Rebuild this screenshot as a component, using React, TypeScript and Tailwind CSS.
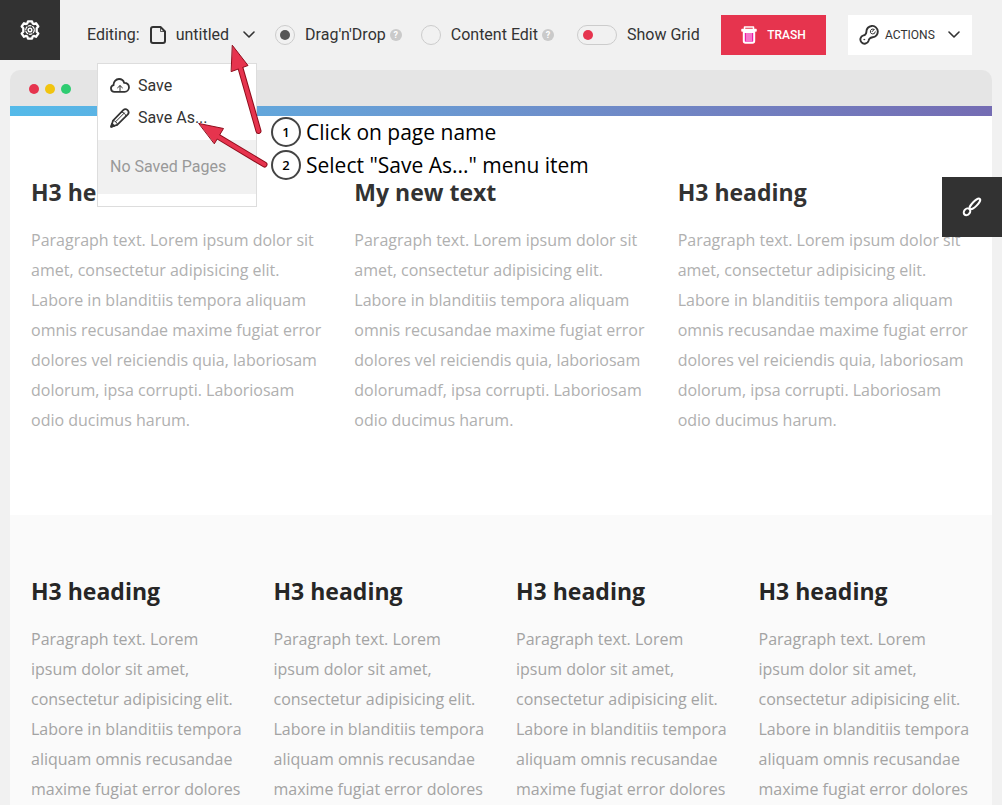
import { useState, type ReactNode } from "react";

function Icon({ className, children, box = "0 0 20 20" }: { className: string; children: ReactNode; box?: string }) {
  return (
    <svg viewBox={box} className={className} fill="none" stroke="currentColor" strokeWidth="2" strokeLinejoin="round" strokeLinecap="round" aria-hidden="true">
      {children}
    </svg>
  );
}

function GearIcon() {
  return (
    <Icon className="size-5">
      <path d="M7.3 3.5 8 1.4h4l.7 2.100 1.100.6 2.200-.9 2.300 3.300-1.600 1.700v3.600l1.600 1.700-2.300 3.300-2.200-.9-1.100.6-.7 2.100H8l-.7-2.100-1.100-.6-2.200.9-2.300-3.300 1.600-1.700V8.200L1.700 6.500 4 3.200l2.200.9z" strokeWidth="2.300" />
      <circle cx="10" cy="10" r="4.300" strokeWidth="1.200" strokeDasharray="2.900 1.600" />
      <circle cx="10" cy="10" r="1.800" strokeWidth="1.500" />
    </Icon>
  );
}

function PageIcon() {
  return (
    <Icon className="h-[18px] w-4" box="0 0 16 18">
      <path d="M10.500 1H3a2 2 0 0 0-2 2v12a2 2 0 0 0 2 2h10a2 2 0 0 0 2-2V5.500z" strokeWidth="2" />
      <path d="M10.500 1.400v4.100h4.100" strokeWidth=".8" />
    </Icon>
  );
}

function ChevronIcon() {
  return (
    <Icon className="h-[7px] w-3" box="0 0 12 7">
      <path d="m1 1 5 5 5-5" strokeWidth="1.600" />
    </Icon>
  );
}

function CloudIcon() {
  return (
    <Icon className="h-[15px] w-5" box="0 0 20 15">
      <path d="M4.400 13.800a3.400 3.400 0 0 1-.8-6.700C3.300 3.800 5.900 1 9 1c2.600 0 4.500 1.500 5.200 3.900 2.700-.2 4.800 1.700 4.800 4.300s-2 4.600-4.400 4.600z" strokeWidth="1.800" />
      <path d="M10 13V7.800M7.600 9.800 10 7.600l2.400 2.200" strokeWidth="1" />
    </Icon>
  );
}

function PencilIcon() {
  return (
    <Icon className="size-5">
      <path d="M1.200 18.800 3 12.600 13.200 2.200c1.300-1.300 3.200-1.200 4.400 0s1.300 3.100 0 4.400L7.200 16.900z" strokeWidth="1.700" />
      <path d="M3.200 12.600c1.900 0 4.200 2.200 4.200 4.200M5.900 13.500l8.500-8.600M11.600 4c2.200.3 4 2 4.400 4.300" strokeWidth="1" />
      <path d="M1.200 18.800 2 15.900l2 2z" fill="currentColor" />
    </Icon>
  );
}

function TrashIcon() {
  return (
    <Icon className="h-[18px] w-4" box="0 0 16 18">
      <path d="M2.800 6h10.400v9a1.700 1.700 0 0 1-1.700 1.700h-7A1.700 1.700 0 0 1 2.800 15z" fill="#ee1fa8" strokeWidth="2" />
      <path d="M1 4.900V3.500h14v1.400zM3.500 3V1h9v2" strokeWidth="1.500" />
      <path d="M6 7v8M8 7v8M10 7v8" strokeWidth=".8" />
    </Icon>
  );
}

function WrenchIcon() {
  return (
    <Icon className="size-5">
      <path d="M7.400 6.800A5.700 5.700 0 1 1 13.600 12.300C12.200 12.500 11.400 12.900 10.600 13.700c-.7.800-.9 1.200-1 2A4.200 4.200 0 1 1 4.500 10.400c.9-.2 1.300-.4 1.900-1.100.7-.7.900-1.300 1-2.500z" strokeWidth="1.900" />
      <path d="M14.900 4.200a2.500 2.500 0 1 0 1.400 2.700M13.200 6.600l2-2.200" strokeWidth="1" />
      <circle cx="5.200" cy="14.600" r=".5" fill="currentColor" strokeWidth=".5" />
    </Icon>
  );
}

function BrushIcon() {
  return (
    <Icon className="size-5">
      <ellipse cx="12.900" cy="6.900" rx="7" ry="2.400" transform="rotate(-45 12.900 6.900)" />
      <ellipse cx="5" cy="14.800" rx="3.700" ry="2.900" transform="rotate(-50 5 14.800)" />
    </Icon>
  );
}

function HelpBadge() {
  return <span className="ml-1 grid size-3 place-content-center rounded-full bg-[#cacaca] text-[9px] leading-3 font-bold text-white">?</span>;
}

const modes = [
  { id: "drag", label: "Drag'n'Drop" },
  { id: "edit", label: "Content Edit" },
];

function Toolbar() {
  const [mode, setMode] = useState("drag");
  const [grid, setGrid] = useState(false);
  return (
    <header className="flex h-[70px] text-[16px] leading-5 text-[#333]">
      <button aria-label="Settings" className="grid size-[60px] shrink-0 place-content-center bg-[#323232] text-white">
        <GearIcon />
      </button>
      <div className="flex h-[69px] grow items-center pr-[30px]">
        <div className="relative ml-[27px]">
          <button className="flex items-center">
            Editing:
            <span className="mx-[10px]"><PageIcon /></span>
            untitled
            <span className="ml-[14px]"><ChevronIcon /></span>
          </button>
          <PageMenu />
        </div>
        <div className="ml-5 flex items-center gap-[19px]">
          {modes.map((m) => (
            <div key={m.id} className="flex items-center">
              <input
                id={m.id}
                type="radio"
                name="mode"
                checked={mode === m.id}
                onChange={() => setMode(m.id)}
                className="grid size-5 appearance-none place-content-center rounded-full border border-[#ccc] before:size-[10px] before:rounded-full checked:before:bg-[#555]"
              />
              <label htmlFor={m.id} className="pl-[10px] whitespace-nowrap">{m.label}</label>
              <HelpBadge />
            </div>
          ))}
        </div>
        <div className="ml-[23px] flex items-center">
          <input
            id="grid"
            type="checkbox"
            checked={grid}
            onChange={() => setGrid(!grid)}
            className="flex h-5 w-10 appearance-none items-center rounded-full border border-[#ccc] px-[5px] before:size-[10px] before:rounded-full before:bg-[#e6344e] checked:justify-end"
          />
          <label htmlFor="grid" className="pl-[10px] whitespace-nowrap">Show Grid</label>
        </div>
        <div className="ml-auto flex gap-[22px] text-[12px]">
          <button className="flex h-10 w-[105px] items-center justify-center gap-[10px] bg-[#e6344e] font-medium text-white">
            <TrashIcon />
            TRASH
          </button>
          <button className="flex h-10 w-[124px] items-center gap-[6px] bg-white pr-3 pl-[11px]">
            <WrenchIcon />
            ACTIONS
            <span className="ml-auto"><ChevronIcon /></span>
          </button>
        </div>
      </div>
    </header>
  );
}

function PageMenu() {
  return (
    <div className="absolute top-[38px] left-[10px] z-10 w-40 border border-[#ddd] bg-white pt-[6px] pb-3">
      <button className="flex h-8 w-full items-center gap-2 pl-3"><CloudIcon />Save</button>
      <button className="flex h-8 w-full items-center gap-2 pl-3"><PencilIcon />Save As...</button>
      <p className="mt-[6px] flex h-[54px] items-center bg-[#f1f1f1] pl-3 text-[#999]">No Saved Pages</p>
    </div>
  );
}

function Step({ n, children }: { n: number; children: ReactNode }) {
  return (
    <li className="flex items-center gap-[5px]">
      <span className="grid size-[30px] place-content-center rounded-full border-2 border-[#444] bg-white text-[13px] leading-5 font-semibold">{n}</span>
      {children}
    </li>
  );
}

function Annotations() {
  return (
    <>
      <svg className="pointer-events-none absolute top-[40px] left-[190px] z-20 h-[130px] w-[85px]" viewBox="190 40 85 130" strokeLinejoin="round" strokeLinecap="round" aria-hidden="true">
        <path d="M240.500 68 258.500 131M217 136 264.500 164.500" stroke="#8f0d1c" strokeWidth="6" />
        <g fill="#e6344e" stroke="#8f0d1c">
          <path d="M232.500 45.500 248 65.500 231.500 71.500z" />
          <path d="M199 123.500 223.500 128.500 214.500 143.500z" />
        </g>
        <path d="M240 66.500 258.500 131M216 135.500 264.500 164.500" stroke="#e6344e" strokeWidth="4" />
      </svg>
      <ol className="absolute top-[117px] left-[271px] z-20 flex flex-col gap-[3px] font-['Open_Sans',sans-serif] text-[21px] leading-[30px] whitespace-nowrap text-black">
        <Step n={1}>Click on page name</Step>
        <Step n={2}>Select "Save As..." menu item</Step>
      </ol>
    </>
  );
}

type Block = { title: string; text: string };

const lorem =
  "Paragraph text. Lorem ipsum dolor sit amet, consectetur adipisicing elit. Labore in blanditiis tempora aliquam omnis recusandae maxime fugiat error dolores";
const tail = " vel reiciendis quia, laboriosam dolorum, ipsa corrupti. Laboriosam odio ducimus harum.";

const topBlocks: Block[] = [
  { title: "H3 heading", text: lorem + tail },
  { title: "My new text", text: lorem + tail.replace("dolorum", "dolorumadf") },
  { title: "H3 heading", text: lorem + tail },
];
const bottomBlocks: Block[] = Array.from({ length: 4 }, () => ({ title: "H3 heading", text: lorem }));

function Column({ title, text }: Block) {
  return (
    <article className="px-[15px]">
      <h3 className="mb-4 text-[23px] leading-[33px] font-bold">{title}</h3>
      <p className="text-[16px] leading-[30px]">{text}</p>
    </article>
  );
}

export default function App() {
  return (
    <div className="relative flex min-h-screen flex-col bg-[#f1f1f1] font-[Roboto,sans-serif]">
      <Toolbar />
      <main className="mx-[10px] flex grow flex-col font-['Open_Sans',sans-serif]">
        <div className="flex h-9 items-center gap-[6px] rounded-t-[10px] bg-[#e5e5e5] pt-[2px] pl-[19px]">
          <span className="size-[10px] rounded-full bg-[#e6344e]" />
          <span className="size-[10px] rounded-full bg-[#f1c40f]" />
          <span className="size-[10px] rounded-full bg-[#2ecc71]" />
        </div>
        <div className="h-[10px] bg-linear-to-r from-[#54bae9] to-[#746cb3]" />
        <section className="bg-white pt-[60px] pb-20 text-[#b0b0b0] [&_h3]:text-[#323232]">
          <div className="mx-auto grid max-w-[970px] grid-cols-3">
            {topBlocks.map((b, i) => <Column key={i} {...b} />)}
          </div>
        </section>
        <section className="grow bg-[#fafafa] pt-[60px] text-[#a3a3a3] [&_h3]:text-[#262626]">
          <div className="mx-auto grid max-w-[970px] grid-cols-4">
            {bottomBlocks.map((b, i) => <Column key={i} {...b} />)}
          </div>
        </section>
      </main>
      <button aria-label="Styles" className="absolute top-[177px] right-0 grid size-[60px] place-content-center bg-[#323232] text-white">
        <BrushIcon />
      </button>
      <Annotations />
    </div>
  );
}
